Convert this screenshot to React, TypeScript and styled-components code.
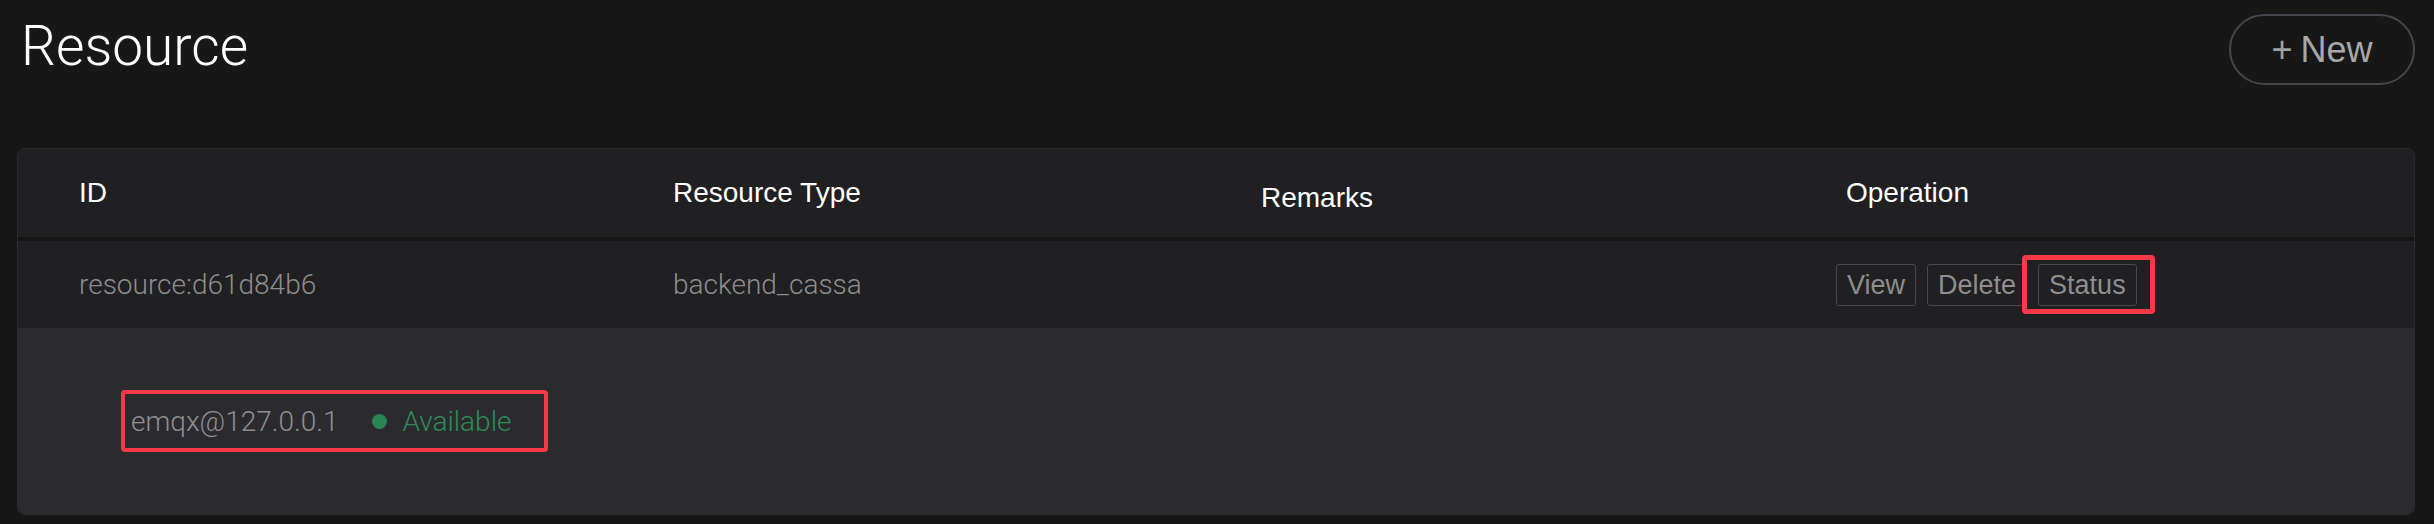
import React from 'react';
import styled, { createGlobalStyle } from 'styled-components';

const GlobalStyle = createGlobalStyle`
  body {
    margin: 0;
    background: #171717;
    font-family: 'Liberation Sans', Arial, sans-serif;
  }
`;

const Page = styled.div`
  padding: 14px 19px 11px 17px;
  background: #171717;
  min-height: 524px;
  box-sizing: border-box;
`;

const TopBar = styled.div`
  display: flex;
  justify-content: space-between;
  align-items: flex-start;
  height: 71px;
  margin-bottom: 63px;
`;

const Title = styled.h1`
  margin: -3px 0 0 4px;
  font-family: Roboto, 'Liberation Sans', sans-serif;
  font-weight: 300;
  font-size: 55px;
  line-height: 71px;
  color: #ffffff;
`;

const NewButton = styled.button`
  width: 186px;
  height: 71px;
  border: 2px solid #46464c;
  border-radius: 36px;
  background: transparent;
  color: #a8a8a8;
  font-family: 'Liberation Sans', Arial, sans-serif;
  font-size: 36px;
  display: flex;
  align-items: center;
  justify-content: center;
  gap: 8px;
  padding: 0;
`;

const Plus = styled.span`
  font-weight: 300;
  color: #a0a0a0;
`;

const Card = styled.div`
  border: 1px solid #2c2c2f;
  border-radius: 8px;
  overflow: hidden;
  background: #201f21;
`;

const Row = styled.div<{ $height: number }>`
  display: grid;
  grid-template-columns: 594px 588px 585px 1fr;
  height: ${(p) => p.$height}px;
  align-items: center;
`;

const HeadRow = styled(Row)`
  border-bottom: 4px solid #161616;
`;

const HeadCell = styled.div<{ $shift?: number }>`
  padding-left: 61px;
  padding-top: ${(p) => (p.$shift || 0) * 2}px;
  font-size: 28px;
  color: #ffffff;
`;

const Cell = styled.div<{ $pad?: number }>`
  padding-left: ${(p) => p.$pad ?? 61}px;
  font-family: Roboto, 'Liberation Sans', sans-serif;
  font-weight: 300;
  font-size: 28px;
  color: #8d8d8d;
  display: flex;
  align-items: center;
  gap: 11px;
`;

const OpButton = styled.button`
  position: relative;
  height: 42px;
  padding: 0 10px;
  border: 1px solid #48484d;
  border-radius: 3px;
  background: transparent;
  color: #8e8e8e;
  font-family: 'Liberation Sans', Arial, sans-serif;
  font-size: 27px;
  line-height: 40px;
`;

const Highlight = styled.span<{ $t: number; $r: number; $b: number; $l: number; $w: number }>`
  position: absolute;
  top: ${(p) => -p.$t}px;
  right: ${(p) => -p.$r}px;
  bottom: ${(p) => -p.$b}px;
  left: ${(p) => -p.$l}px;
  border: ${(p) => p.$w}px solid #f7394a;
  border-radius: 4px;
  pointer-events: none;
`;

const Expanded = styled.div`
  height: 186px;
  background: #2b2a2f;
  display: flex;
  align-items: center;
  padding-left: 113px;
`;

const NodeLine = styled.div`
  position: relative;
  display: inline-flex;
  align-items: center;
  height: 34px;
  font-family: Roboto, 'Liberation Sans', sans-serif;
  font-weight: 300;
  font-size: 28px;
`;

const NodeName = styled.span`
  color: #8f8f8f;
  margin-right: 34px;
`;

const Dot = styled.span`
  width: 15px;
  height: 15px;
  border-radius: 50%;
  background: #2a8554;
  margin-right: 15px;
`;

const StatusText = styled.span`
  color: #2e8b57;
`;

const columns = ['ID', 'Resource Type', 'Remarks', 'Operation'];

const App: React.FC = () => {
  return (
    <Page>
      <GlobalStyle />
      <TopBar>
        <Title>Resource</Title>
        <NewButton>
          <Plus>+</Plus>New
        </NewButton>
      </TopBar>

      <Card>
        <HeadRow $height={88}>
          {columns.map((c) => (
            <HeadCell key={c} $shift={c === 'Remarks' ? 5 : 0}>
              {c}
            </HeadCell>
          ))}
        </HeadRow>
        <Row $height={87}>
          <Cell>resource:d61d84b6</Cell>
          <Cell>backend_cassa</Cell>
          <Cell />
          <Cell $pad={51}>
            <OpButton>View</OpButton>
            <OpButton>Delete</OpButton>
            <OpButton>
              Status
              <Highlight $t={10} $r={19} $b={9} $l={17} $w={5} />
            </OpButton>
          </Cell>
        </Row>
        <Expanded>
          <NodeLine>
            <NodeName>emqx@127.0.0.1</NodeName>
            <Dot />
            <StatusText>Available</StatusText>
            <Highlight $t={14} $r={37} $b={14} $l={10} $w={4} />
          </NodeLine>
        </Expanded>
      </Card>
    </Page>
  );
};

export default App;
